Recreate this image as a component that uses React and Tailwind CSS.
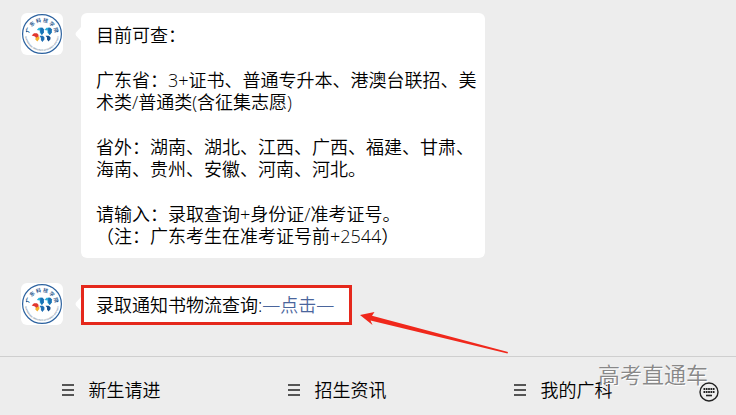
const menuItems = ['新生请进', '招生资讯', '我的广科'];

function SchoolLogo() {
    return (
        <svg viewBox="0 0 42 42" className="h-full w-full" role="img" aria-label="广东科技学院">
            <defs>
                <path id="arcTop" d="M8 22 A13 13 0 0 1 34 22" />
                <path id="arcBottom" d="M4 21 A17 17 0 0 0 38 21" />
            </defs>
            <circle cx="21" cy="21" r="19.4" fill="#fff" stroke="#2d63a0" strokeWidth="1.2" />
            <text fontSize="5" fontWeight="bold" fill="#28578f" textAnchor="middle">
                <textPath href="#arcTop" startOffset="50%">广 东 科 技 学 院</textPath>
            </text>
            <text fontSize="2" fontWeight="bold" fill="#6b8398" textAnchor="middle">
                <textPath href="#arcBottom" startOffset="50%">GUANGDONG UNIVERSITY OF SCIENCE AND TECH</textPath>
            </text>
            <circle cx="5.6" cy="18.5" r="0.7" fill="#28578f" />
            <circle cx="36.4" cy="18.5" r="0.7" fill="#28578f" />
            <path d="M15.800 17l2-2.200h3.700l1.300 1.400v3.300l-2 2.500-2-2.300v-2.200z" fill="#2bb0d8" />
            <path d="M19.300 14.800h2.200l1.300 1.400v3.300l-2 2.500-1.500-3z" fill="#1c70b5" />
            <path d="M23.500 17l2-2.200h3.700l1.500 1.400v3.300l-2 2.500-2.200-2.300v-2.200z" fill="#2bb0d8" />
            <path d="M27.200 14.800h2l1.500 1.400v3.300l-2 2.500-1.500-3z" fill="#1c70b5" />
            <path d="M10.700 22.500l2.300-2.200h3l1.500 1.500v3l-2 1-1.500-2.300z" fill="#e2382e" />
            <path d="M14 26l2-2 2.300-0.500v2.500l-2 2.500z" fill="#f4b32c" />
            <path d="M18.500 22.800h3.300l1.600 1.500v2.300l-2 2.300-1.500-2v-2z" fill="#1f6fb4" />
            <path d="M24.500 22.800h3.300l1.700 1.500v2l-2 2.200-1.500-2v-2z" fill="#174f8c" />
        </svg>
    );
}

function Message({ children }) {
    return (
        <div className="flex items-start">
            <div className="h-[42px] w-[42px] shrink-0 overflow-hidden rounded-md bg-white">
                <SchoolLogo />
            </div>
            <svg viewBox="0 0 6 14" className="ml-3 mt-3.5 h-3.5 w-1.5 shrink-0" aria-hidden="true">
                <path d="M6 0 1 5.500Q0 7 1 8.500L6 14z" fill="#fff" />
            </svg>
            {children}
        </div>
    );
}

function MenuLines() {
    return (
        <svg viewBox="0 0 12 12" className="h-3 w-3" stroke="#555" strokeWidth="2" aria-hidden="true">
            <path d="M0 1h12M0 6h12M0 11h12" />
        </svg>
    );
}

function KeyboardIcon() {
    return (
        <svg viewBox="0 0 20 20" className="h-5 w-5" fill="none" stroke="#222" aria-hidden="true">
            <circle cx="10" cy="10" r="9" strokeWidth="1.400" />
            <path d="M4.500 7h11M4.500 10h11" strokeWidth="1.800" strokeDasharray="1.700 0.625" />
            <path d="M7 13.500h6" strokeWidth="1.600" />
        </svg>
    );
}

export default function App() {
    return (
        <div className="relative flex min-h-screen flex-col bg-[#ededed] font-['Open_Sans','Noto_Sans_CJK_SC',sans-serif] text-lg font-[350] leading-[22px] text-black">
            <main className="relative flex flex-1 flex-col gap-[25px] px-[21px] pb-[31px] pt-[13px]">
                <Message>
                    <div className="flex flex-col gap-[23px] whitespace-nowrap rounded-md bg-white py-[11px] pl-[15px] pr-2">
                        <p>目前可查：</p>
                        <p>
                            广东省：3+证书、普通专升本、港澳台联招、美
                            <br />
                            术类/普通类(含征集志愿)
                        </p>
                        <p>
                            省外：湖南、湖北、江西、广西、福建、甘肃、
                            <br />
                            海南、贵州、安徽、河南、河北。
                        </p>
                        <p>
                            请输入：录取查询+身份证/准考证号。
                            <br />
                            （注：广东考生在准考证号前+2544）
                        </p>
                    </div>
                </Message>
                <Message>
                    <p className="mt-0.5 whitespace-nowrap border-[3px] border-[#e5281c] bg-white py-[6px] pl-3 pr-[15px]">
                        录取通知书物流查询:
                        <a href="#query" className="text-[#4a659c]">—点击—</a>
                    </p>
                </Message>
                {/* arrow pointing at the query link */}
                <svg viewBox="0 0 150 44" className="absolute left-[359px] top-[312px] h-11 w-[150px]" aria-hidden="true">
                    <path d="M1 3 15.500 0 13 3.800 149 40 148.500 41.500 11.500 8.500 13.500 13z" fill="#f0281c" />
                </svg>
            </main>
            <footer className="relative flex h-[59px] items-center border-t border-[#cfcfcf] pt-2">
                <nav className="grid flex-1 grid-cols-3">
                    {menuItems.map((item) => (
                        <button key={item} type="button" className="flex items-center justify-center gap-[15px] pr-1">
                            <MenuLines />
                            {item}
                        </button>
                    ))}
                </nav>
                <button type="button" aria-label="键盘" className="flex w-[58px] items-center justify-center pl-1 pt-1">
                    <KeyboardIcon />
                </button>
                <span className="pointer-events-none absolute right-7 top-1.5 text-[22px] text-[#888] [text-shadow:1px_1px_0_#fff]">
                    高考直通车
                </span>
            </footer>
        </div>
    );
}
